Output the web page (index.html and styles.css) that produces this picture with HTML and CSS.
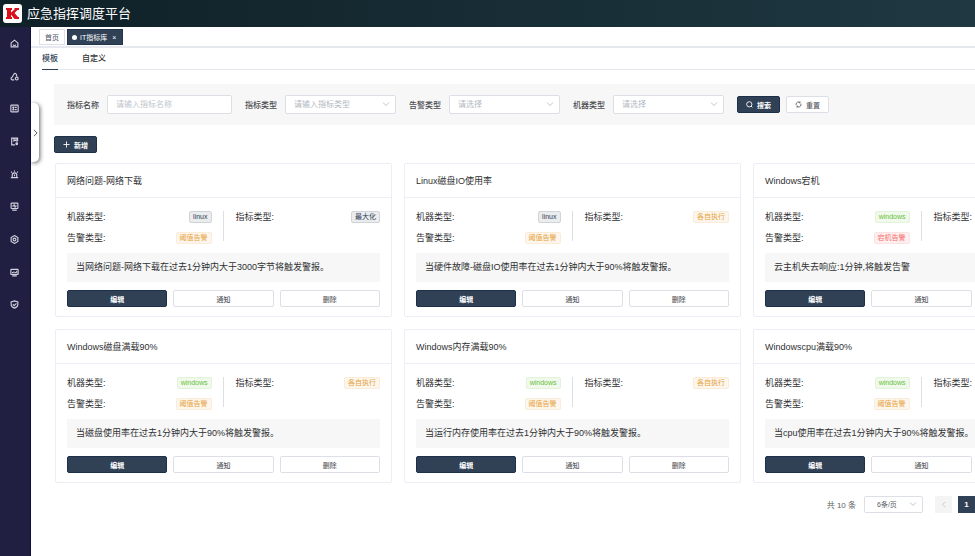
FILE: index.html
```html
<!DOCTYPE html>
<html lang="zh-CN">
<head>
<meta charset="utf-8">
<title>应急指挥调度平台</title>
<link rel="stylesheet" href="styles.css">
</head>
<body>
<header class="topbar">
  <svg class="logo" viewBox="0 0 19 19" aria-hidden="true"><rect width="19" height="19" rx="3" fill="#fff"/><path d="M3 4h6v2H8v2.500L11.500 5.500V4H16v2h-1.500l-3 3 3.500 4H16v2h-4.500L8 10.500V13h1v2H3v-2h1V6H3z" fill="#d9101c"/></svg>
  <h1>应急指挥调度平台</h1>
</header>
<div class="shell">
  <aside class="sidebar">
    <nav class="menu" aria-label="主菜单">
      <a href="#" aria-label="首页"><svg viewBox="0 0 16 16"><path d="M2 7l6-5 6 5v7H2zM5.500 10c.5 2 4.500 2 5 0"/></svg></a>
      <a href="#" aria-label="拓扑"><svg viewBox="0 0 16 16"><path d="M6.500 5.500a2.500 2.500 0 114.500 1M6.500 5L3.500 9.500M7.500 14H4a2.300 2.300 0 01-.5-4.500M11 5l1.500 3"/><circle cx="12" cy="11.500" r="2.500"/></svg></a>
      <a href="#" aria-label="列表"><svg viewBox="0 0 16 16"><rect x="1.500" y="2" width="13" height="12" rx="1"/><path d="M4 6h2M8 6h4M4 10h2M8 10h4M6 4.500v7"/></svg></a>
      <a href="#" aria-label="文档"><svg viewBox="0 0 16 16"><path d="M13.500 8V2H3v12h6M7 2v5l2-1.500L11 7V2"/><circle cx="12" cy="12" r="1.500" fill="currentColor"/></svg></a>
      <a href="#" aria-label="告警"><svg viewBox="0 0 16 16"><path d="M4 13V9a4 4 0 018 0v4M1.500 13.500h13M8 1v2M2 3l1.500 1.500M14 3l-1.500 1.500M8 8v3"/></svg></a>
      <a href="#" aria-label="监控"><svg viewBox="0 0 16 16"><rect x="2" y="2" width="12" height="9.500" rx="1"/><path d="M4 7h2l1.500-2L9 9l1-2h2M4 14.500h8"/></svg></a>
      <a href="#" aria-label="设置"><svg viewBox="0 0 16 16"><path d="M8 1l6 3.500v7L8 15l-6-3.500v-7z"/><circle cx="8" cy="8" r="2.500"/></svg></a>
      <a href="#" aria-label="大屏"><svg viewBox="0 0 16 16"><rect x="1.500" y="2.500" width="13" height="9" rx="1"/><path d="M4.500 9V7M7 9V6M9.500 9V7M12 9V5M2 11h12M4 14h8"/></svg></a>
      <a href="#" aria-label="安全"><svg viewBox="0 0 16 16"><path d="M8 1.500l6 2V8c0 3.500-3 5.500-6 6.500C5 13.500 2 11.500 2 8V3.500zM5 7.500l2.500 2.500L11.500 6"/></svg></a>
    </nav>
  </aside>
  <main class="main">
    <button class="drawer" aria-label="展开"><svg viewBox="0 0 6 10"><path d="M1 1l4 4-4 4"/></svg></button>
    <div class="pages">
      <a class="page" href="#">首页</a>
      <a class="page current" href="#"><i></i>IT指标库<span>×</span></a>
    </div>
    <div class="tabs">
      <a class="tab active" href="#">模板</a>
      <a class="tab" href="#">自定义</a>
    </div>
    <div class="content">
      <form class="filters">
        <div class="field"><label for="name">指标名称</label><input id="name" type="text" placeholder="请输入指标名称"></div>
        <div class="field"><label for="kind">指标类型</label><span class="pick"><select id="kind"><option>请输入指标类型</option></select><svg viewBox="0 0 8 5"><path d="M1 .5l3 3 3-3"/></svg></span></div>
        <div class="field"><label for="alarm">告警类型</label><span class="pick"><select id="alarm"><option>请选择</option></select><svg viewBox="0 0 8 5"><path d="M1 .5l3 3 3-3"/></svg></span></div>
        <div class="field"><label for="machine">机器类型</label><span class="pick"><select id="machine"><option>请选择</option></select><svg viewBox="0 0 8 5"><path d="M1 .5l3 3 3-3"/></svg></span></div>
        <div class="actions">
          <button class="btn primary" type="button"><svg viewBox="0 0 16 16"><circle cx="7.500" cy="7.500" r="6"/><path d="M11.500 11.500l3 3"/></svg>搜索</button>
          <button class="btn" type="button"><svg viewBox="0 0 16 16"><path d="M2.500 10V7a5.500 5.500 0 019-3.500M13.500 6v3a5.500 5.500 0 01-9 3.500M11.500 1v3H8.500M4.500 15v-3h3"/></svg>重置</button>
        </div>
      </form>
      <button class="btn primary add" type="button"><svg viewBox="0 0 16 16"><path d="M8 1v14M1 8h14"/></svg>新增</button>
      <div class="cards">
        <article class="card">
          <h2>网络问题-网络下载</h2>
          <div class="body">
            <div class="info">
              <dl><dt>机器类型:</dt><dd class="tag slate">linux</dd><dt>告警类型:</dt><dd class="tag amber">阈值告警</dd></dl>
              <dl><dt>指标类型:</dt><dd class="tag slate">最大化</dd></dl>
            </div>
            <p>当网络问题-网络下载在过去1分钟内大于3000字节将触发警报。</p>
            <div class="ops"><button class="btn primary">编辑</button><button class="btn">通知</button><button class="btn">删除</button></div>
          </div>
        </article>
        <article class="card">
          <h2>Linux磁盘IO使用率</h2>
          <div class="body">
            <div class="info">
              <dl><dt>机器类型:</dt><dd class="tag slate">linux</dd><dt>告警类型:</dt><dd class="tag amber">阈值告警</dd></dl>
              <dl><dt>指标类型:</dt><dd class="tag amber">各自执行</dd></dl>
            </div>
            <p>当硬件故障-磁盘IO使用率在过去1分钟内大于90%将触发警报。</p>
            <div class="ops"><button class="btn primary">编辑</button><button class="btn">通知</button><button class="btn">删除</button></div>
          </div>
        </article>
        <article class="card">
          <h2>Windows宕机</h2>
          <div class="body">
            <div class="info">
              <dl><dt>机器类型:</dt><dd class="tag green">windows</dd><dt>告警类型:</dt><dd class="tag red">宕机告警</dd></dl>
              <dl><dt>指标类型:</dt><dd class="tag amber">各自执行</dd></dl>
            </div>
            <p>云主机失去响应:1分钟,将触发告警</p>
            <div class="ops"><button class="btn primary">编辑</button><button class="btn">通知</button><button class="btn">删除</button></div>
          </div>
        </article>
        <article class="card">
          <h2>Windows磁盘满载90%</h2>
          <div class="body">
            <div class="info">
              <dl><dt>机器类型:</dt><dd class="tag green">windows</dd><dt>告警类型:</dt><dd class="tag amber">阈值告警</dd></dl>
              <dl><dt>指标类型:</dt><dd class="tag amber">各自执行</dd></dl>
            </div>
            <p>当磁盘使用率在过去1分钟内大于90%将触发警报。</p>
            <div class="ops"><button class="btn primary">编辑</button><button class="btn">通知</button><button class="btn">删除</button></div>
          </div>
        </article>
        <article class="card">
          <h2>Windows内存满载90%</h2>
          <div class="body">
            <div class="info">
              <dl><dt>机器类型:</dt><dd class="tag green">windows</dd><dt>告警类型:</dt><dd class="tag amber">阈值告警</dd></dl>
              <dl><dt>指标类型:</dt><dd class="tag amber">各自执行</dd></dl>
            </div>
            <p>当运行内存使用率在过去1分钟内大于90%将触发警报。</p>
            <div class="ops"><button class="btn primary">编辑</button><button class="btn">通知</button><button class="btn">删除</button></div>
          </div>
        </article>
        <article class="card">
          <h2>Windowscpu满载90%</h2>
          <div class="body">
            <div class="info">
              <dl><dt>机器类型:</dt><dd class="tag green">windows</dd><dt>告警类型:</dt><dd class="tag amber">阈值告警</dd></dl>
              <dl><dt>指标类型:</dt><dd class="tag amber">各自执行</dd></dl>
            </div>
            <p>当cpu使用率在过去1分钟内大于90%将触发警报。</p>
            <div class="ops"><button class="btn primary">编辑</button><button class="btn">通知</button><button class="btn">删除</button></div>
          </div>
        </article>
      </div>
      <div class="pager">
        <span>共 10 条</span>
        <span class="pick size"><select aria-label="每页条数"><option>6条/页</option></select><svg viewBox="0 0 8 5"><path d="M1 .5l3 3 3-3"/></svg></span>
        <button class="step" aria-label="上一页" disabled><svg viewBox="0 0 6 10"><path d="M5 1L1 5l4 4"/></svg></button>
        <button class="step on">1</button>
      </div>
    </div>
  </main>
</div>
</body>
</html>
```
FILE: styles.css
```css
* { box-sizing: border-box; }
body, h1, h2, p, dl, dd { margin: 0; }
body {
  display: flex;
  flex-direction: column;
  min-height: 100vh;
  overflow: hidden;
  background: #fff;
  color: #303133;
  font-family: "Liberation Sans", "Noto Sans CJK SC", sans-serif;
  font-size: 9px;
}
button, input, select { font: inherit; color: inherit; }
a { color: inherit; text-decoration: none; }
svg { display: block; fill: none; stroke: currentColor; stroke-width: 1; }

.topbar {
  display: flex;
  align-items: center;
  gap: 5px;
  height: 27px;
  padding: 0 3px;
  background: linear-gradient(90deg, #0f2027, #1f3842);
  color: #fff;
}
.topbar h1 { font-size: 13px; font-weight: 400; line-height: 20px; }
.logo { width: 19px; height: 19px; stroke: none; }

.shell { display: flex; flex: 1; }
.sidebar {
  flex: none;
  width: 31px;
  background: #201f42;
  border-right: 1px solid #0d0d38;
  color: #d2d2de;
}
.menu { display: flex; flex-direction: column; height: 294px; }
.menu a { display: grid; place-items: center; flex: 1; padding-right: 1px; }
.menu svg { width: 9px; height: 9px; stroke-width: 2; }

.main { position: relative; flex: 1; min-width: 0; overflow: hidden; }
.drawer {
  position: absolute;
  left: 0;
  top: 76px;
  display: grid;
  place-items: center;
  width: 8px;
  height: 59px;
  padding: 0;
  border: 0;
  border-radius: 0 5px 5px 0;
  background: #fff;
  box-shadow: 1px 1px 4px rgba(0, 0, 0, .6);
}
.drawer svg { width: 5px; height: 8px; stroke-width: 1; }

.pages {
  display: flex;
  gap: 2px;
  height: 21px;
  padding: 2px 8px;
  border-bottom: 2px solid #e5e8ee;
}
.page {
  display: flex;
  align-items: center;
  height: 16px;
  padding: 0 5px;
  border: 1px solid #dcdfe6;
  color: #495060;
  font-size: 7px;
}
.page.current { gap: 3px; padding: 0 4px; background: #304156; border-color: #22354c; color: #fff; }
.page i { width: 5px; height: 5px; border-radius: 50%; background: #fff; }
.page span { padding: 0 2px; }

.tabs {
  display: flex;
  gap: 24px;
  height: 22px;
  margin-left: 11px;
  border-bottom: 1px solid #e4e7ed;
}
.tab { height: 22px; font-size: 8px; line-height: 22px; font-weight: 500; }
.tab.active { color: #304156; border-bottom: 1px solid #304156; }

.content { min-width: 1060px; padding: 14px 0 0 23px; }
.filters {
  display: flex;
  align-items: center;
  gap: 13px;
  height: 41px;
  padding: 0 13px;
  background: #f7f7f7;
}
.field { display: flex; align-items: center; gap: 8px; }
.field label { font-size: 8px; font-weight: 500; color: #4a4c50; }
.field input, .pick select {
  width: 125px;
  height: 19px;
  padding: 0 8px;
  border: 1px solid #dcdfe6;
  border-radius: 2px;
  background: #fff;
  color: #b4b8c2;
  font-size: 8px;
  outline: 0;
}
.field input::placeholder { color: #c0c4cc; }
.pick { display: grid; align-items: center; color: #c0c4cc; }
.pick select { grid-area: 1 / 1; width: 111px; appearance: none; }
.pick svg { grid-area: 1 / 1; justify-self: end; width: 8px; height: 5px; margin-right: 6px; pointer-events: none; }
.actions { display: flex; gap: 6px; }

.btn {
  display: flex;
  align-items: center;
  justify-content: center;
  gap: 4px;
  height: 17px;
  min-width: 43px;
  padding: 0;
  border: 1px solid #dcdfe6;
  border-radius: 2px;
  background: #fff;
  color: #606266;
  font-size: 7px;
  font-weight: 500;
}
.btn svg { width: 7px; height: 7px; stroke-width: 2; }
.btn.primary { background: #304156; border-color: #1c3049; color: #fff; font-weight: 700; }
.add { margin-top: 11px; }

.cards {
  display: grid;
  grid-template-columns: repeat(3, 1fr);
  gap: 12px;
  margin-top: 10px;
  padding: 0 1px;
}
.card { border: 1px solid #ebeef5; border-radius: 2px; }
.card h2 {
  height: 34px;
  padding: 0 11px;
  border-bottom: 1px solid #ebeef5;
  font-size: 9px;
  line-height: 34px;
  font-weight: 400;
}
.body { padding: 8px 11px 9px; }
.info { display: grid; grid-template-columns: 1fr 1fr; gap: 24px; }
.info dl {
  display: grid;
  grid-template-columns: 1fr auto;
  grid-auto-rows: 21px;
  align-items: center;
}
.info dl + dl { position: relative; }
.info dl + dl::before {
  content: "";
  position: absolute;
  left: -13px;
  top: 5px;
  bottom: 7px;
  width: 1px;
  background: #dcdfe6;
}
.tag {
  justify-self: end;
  height: 12px;
  padding: 0 3px;
  border: 1px solid;
  border-radius: 2px;
  font-size: 7px;
  line-height: 10px;
}
.slate { background: #eaecee; border-color: #d0d4d9; color: #304156; }
.amber { background: #fdf6ec; border-color: #faecd8; color: #e6a23c; }
.green { background: #f0f9eb; border-color: #e1f3d8; color: #67c23a; }
.red { background: #fef0f0; border-color: #fde2e2; color: #f56c6c; }
.card p {
  height: 29px;
  margin: 5px 0 8px;
  padding: 0 9px;
  background: #f7f7f7;
  font-size: 9px;
  line-height: 29px;
  white-space: nowrap;
}
.ops { display: grid; grid-template-columns: repeat(3, 1fr); gap: 6px; }

.pager {
  display: flex;
  align-items: center;
  justify-content: flex-end;
  gap: 6px;
  margin-top: 13px;
  padding-right: 116px;
  color: #606266;
  font-size: 8px;
}
.pager > span:first-child { margin-right: 2px; }
.size { margin-right: 6px; }
.size select { width: 59px; height: 17px; padding: 0 12px; color: #606266; font-size: 7px; }
.step {
  display: grid;
  place-items: center;
  width: 17px;
  height: 17px;
  padding: 0;
  border: 0;
  background: #f4f4f5;
  color: #b4b8c2;
  font-weight: 700;
}
.step svg { width: 4px; height: 7px; stroke-width: 1; }
.step.on { background: #304156; color: #fff; }
```
